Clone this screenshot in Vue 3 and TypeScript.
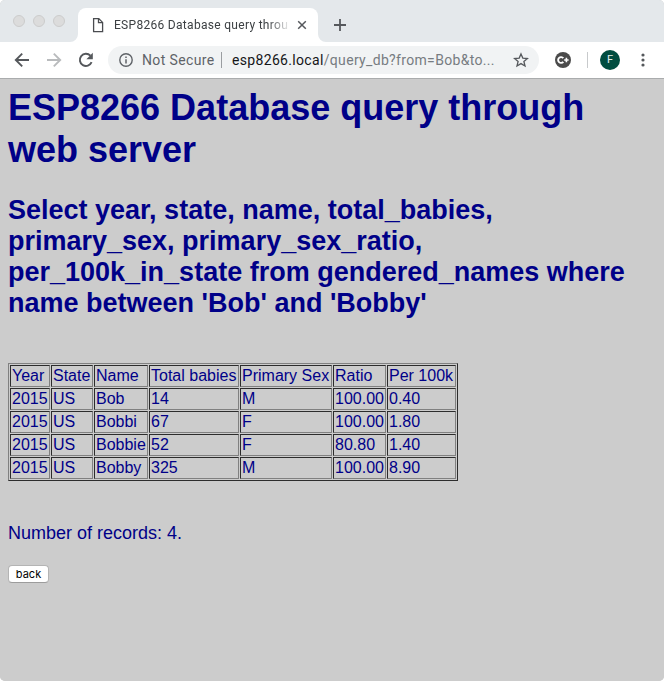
<script setup lang="ts">
interface NameRow {
  year: number
  state: string
  name: string
  total: number
  sex: string
  ratio: string
  per100k: string
}

const columns: string[] = ['Year', 'State', 'Name', 'Total babies', 'Primary Sex', 'Ratio', 'Per 100k']

const rows: NameRow[] = [
  { year: 2015, state: 'US', name: 'Bob', total: 14, sex: 'M', ratio: '100.00', per100k: '0.40' },
  { year: 2015, state: 'US', name: 'Bobbi', total: 67, sex: 'F', ratio: '100.00', per100k: '1.80' },
  { year: 2015, state: 'US', name: 'Bobbie', total: 52, sex: 'F', ratio: '80.80', per100k: '1.40' },
  { year: 2015, state: 'US', name: 'Bobby', total: 325, sex: 'M', ratio: '100.00', per100k: '8.90' },
]
</script>

<template>
  <div class="window">
    <div class="tabstrip">
      <div class="lights"><i></i><i></i><i></i></div>
      <div class="tab">
        <svg class="page-icon" width="12" height="16" viewBox="0 0 12 16">
          <path d="M1.6 1.6h5.2l3.8 3.8v9.2h-9zM6.5 1.7v4h4" fill="none" stroke="#4a4c50" stroke-width="1.3" />
        </svg>
        <span class="title">ESP8266 Database query throu</span>
        <svg class="close" width="10" height="10" viewBox="0 0 10 10">
          <path d="M1.2 1.2l7.6 7.6M8.8 1.2l-7.6 7.6" stroke="#55585c" stroke-width="1.5" />
        </svg>
        <svg class="flare left" width="8" height="8" viewBox="0 0 8 8"><path d="M8 0v8H0a8 8 0 0 0 8-8z" fill="#fff" /></svg>
        <svg class="flare right" width="8" height="8" viewBox="0 0 8 8"><path d="M0 0v8h8a8 8 0 0 1-8-8z" fill="#fff" /></svg>
      </div>
      <svg class="plus" width="12" height="12" viewBox="0 0 12 12">
        <path d="M6 0v12M0 6h12" stroke="#55585c" stroke-width="1.8" />
      </svg>
    </div>

    <div class="toolbar">
      <svg class="back-arrow" width="16" height="16" viewBox="0 0 16 16">
        <path d="M15 8H2M8.2 1.6L1.8 8l6.4 6.4" fill="none" stroke="#55585c" stroke-width="1.9" />
      </svg>
      <svg class="forward-arrow" width="16" height="16" viewBox="0 0 16 16">
        <path d="M1 8h13M7.8 1.6L14.2 8l-6.4 6.4" fill="none" stroke="#b9bbbd" stroke-width="1.9" />
      </svg>
      <svg class="reload" width="16" height="16" viewBox="0 0 16 16">
        <path d="M13.6 10.2A6.1 6.1 0 1 1 12.4 3.7" fill="none" stroke="#55585c" stroke-width="1.9" />
        <path d="M14.8 0.8v6.4H8.4z" fill="#55585c" />
      </svg>
      <div class="omnibox">
        <svg class="info" width="14" height="14" viewBox="0 0 14 14">
          <circle cx="7" cy="7" r="6.2" fill="none" stroke="#5f6368" stroke-width="1.4" />
          <path d="M7 6.2v4.3M7 3.5v1.5" stroke="#5f6368" stroke-width="1.5" />
        </svg>
        <span class="secure">Not Secure</span>
        <i class="bar"></i>
        <span class="url"><b>esp8266.local</b>/query_db?from=Bob&amp;to...</span>
        <svg class="star" width="16" height="16" viewBox="0 0 16 16">
          <path d="M8 1.9l1.8 4.2 4.6.4-3.5 3 1.1 4.5L8 11.6 4 14l1.1-4.5-3.5-3 4.6-.4z" fill="none" stroke="#55585c" stroke-width="1.3" />
        </svg>
      </div>
      <svg class="extension" width="16" height="16" viewBox="0 0 16 16">
        <circle cx="8" cy="8" r="8" fill="#4b4b4b" />
        <path d="M8.3 6.2A2.9 2.9 0 1 0 8.3 9.8" fill="none" stroke="#fff" stroke-width="1.9" />
        <path d="M11.4 5.8v4.4M9.2 8h4.4" stroke="#fff" stroke-width="1.6" />
      </svg>
      <i class="divider"></i>
      <span class="avatar">F</span>
      <svg class="menu" width="4" height="14" viewBox="0 0 4 14" fill="#55585c">
        <circle cx="2" cy="2" r="1.6" /><circle cx="2" cy="7" r="1.6" /><circle cx="2" cy="12" r="1.6" />
      </svg>
    </div>

    <main class="page">
      <h1>ESP8266 Database query through web server</h1>
      <h2>Select year, state, name, total_babies, primary_sex, primary_sex_ratio, per_100k_in_state from gendered_names where name between 'Bob' and 'Bobby'</h2>
      <table>
        <colgroup>
          <col class="c-year" /><col class="c-state" /><col class="c-name" /><col class="c-total" />
          <col class="c-sex" /><col class="c-ratio" /><col class="c-per" />
        </colgroup>
        <tbody>
          <tr>
            <td v-for="c in columns" :key="c">{{ c }}</td>
          </tr>
          <tr v-for="r in rows" :key="r.name">
            <td>{{ r.year }}</td>
            <td>{{ r.state }}</td>
            <td>{{ r.name }}</td>
            <td>{{ r.total }}</td>
            <td>{{ r.sex }}</td>
            <td>{{ r.ratio }}</td>
            <td>{{ r.per100k }}</td>
          </tr>
        </tbody>
      </table>
      <p>Number of records: {{ rows.length }}.</p>
      <button type="button">back</button>
    </main>
  </div>
</template>

<style>
body {
  background: #fff;
}
</style>

<style scoped>
.window {
  width: 664px;
  height: 681px;
  box-sizing: border-box;
  display: flex;
  flex-direction: column;
  overflow: hidden;
  border-radius: 5px;
  background: #ccc;
  font-family: Roboto, sans-serif;
}
.window svg {
  display: block;
  flex: none;
}
.tabstrip {
  height: 42px;
  flex: none;
  display: flex;
  align-items: flex-start;
  background: #e4e8eb;
}
.lights {
  display: flex;
  gap: 8px;
  padding: 15px 0 0 13px;
  width: 65px;
}
.lights i {
  width: 12px;
  height: 12px;
  box-sizing: border-box;
  border-radius: 50%;
  background: #dcdcdc;
  border: 1px solid #cccccc;
}
.tab {
  position: relative;
  width: 240px;
  height: 34px;
  margin-top: 8px;
  box-sizing: border-box;
  padding: 0 11px 0 14px;
  display: flex;
  align-items: center;
  background: #fff;
  border-radius: 8px 8px 0 0;
}
.title {
  width: 177px;
  margin-left: 10px;
  white-space: nowrap;
  font-size: 12px;
  letter-spacing: 0.3px;
  line-height: 16px;
  color: #3c4043;
  -webkit-mask-image: linear-gradient(90deg, #000 154px, transparent 177px);
  mask-image: linear-gradient(90deg, #000 154px, transparent 177px);
}
.close {
  margin-left: 6px;
}
.flare {
  position: absolute;
  bottom: 0;
}
.flare.left {
  left: -8px;
}
.flare.right {
  right: -8px;
}
.plus {
  margin: 19px 0 0 16px;
}
.toolbar {
  height: 37px;
  flex: none;
  box-sizing: border-box;
  padding: 0 19px 1px 14px;
  display: flex;
  align-items: center;
  background: #fff;
  border-bottom: 1px solid #aaacad;
}
.forward-arrow {
  margin-left: 16px;
}
.reload {
  margin-left: 16px;
}
.omnibox {
  width: 431px;
  height: 28px;
  margin-left: 14px;
  box-sizing: border-box;
  padding: 0 10px 0 11px;
  display: flex;
  align-items: center;
  border-radius: 14px;
  background: #f1f3f4;
  font-size: 14px;
  white-space: nowrap;
}
.secure {
  width: 73px;
  margin-left: 9px;
  color: #5f6368;
  letter-spacing: 0.38px;
}
.bar {
  width: 1px;
  height: 16px;
  margin-left: 6px;
  background: #9a9da1;
}
.url {
  width: 263px;
  margin-left: 10px;
  color: #777c81;
  letter-spacing: 0.33px;
}
.url b {
  font-weight: 400;
  color: #151618;
}
.star {
  margin-left: auto;
}
.extension {
  margin-left: 16px;
}
.divider {
  width: 1px;
  height: 16px;
  margin-left: 16px;
  background: #c8cacc;
}
.avatar {
  width: 20px;
  height: 20px;
  margin-left: 12px;
  border-radius: 50%;
  background: #004d40;
  color: #e4eeec;
  font-size: 11px;
  line-height: 20px;
  text-align: center;
}
.menu {
  margin-left: auto;
}
.page {
  flex: 1;
  padding: 8px;
  background: #ccc;
  color: #000088;
  font-family: "Liberation Sans", Arial, sans-serif;
  font-size: 18px;
}
h1 {
  margin: 0;
  font-size: 36px;
  line-height: 42px;
}
h2 {
  margin: 24px 0 44px;
  font-size: 27px;
  line-height: 31px;
}
table {
  width: 450px;
  table-layout: fixed;
  border: 1px solid;
  border-color: #808080 #2c2c2c #2c2c2c #808080;
  border-collapse: separate;
  border-spacing: 1px;
  font-size: 16px;
  line-height: 18px;
}
td {
  padding: 1px;
  border: 1px solid;
  border-color: #2c2c2c #808080 #808080 #2c2c2c;
  white-space: nowrap;
}
.c-year { width: 40px; }
.c-state { width: 42px; }
.c-name { width: 54px; }
.c-total { width: 90px; }
.c-sex { width: 92px; }
.c-ratio { width: 53px; }
.c-per { width: 69px; }
p {
  margin: 42px 0 21px;
  line-height: 21px;
}
button {
  display: block;
  width: 41px;
  height: 18px;
  padding: 0;
  border: 1px solid #b4b4b4;
  border-bottom-color: #9c9c9c;
  border-radius: 4px;
  background: #fff;
  color: #000;
  font: 11px/15px Inter, sans-serif;
}
</style>
